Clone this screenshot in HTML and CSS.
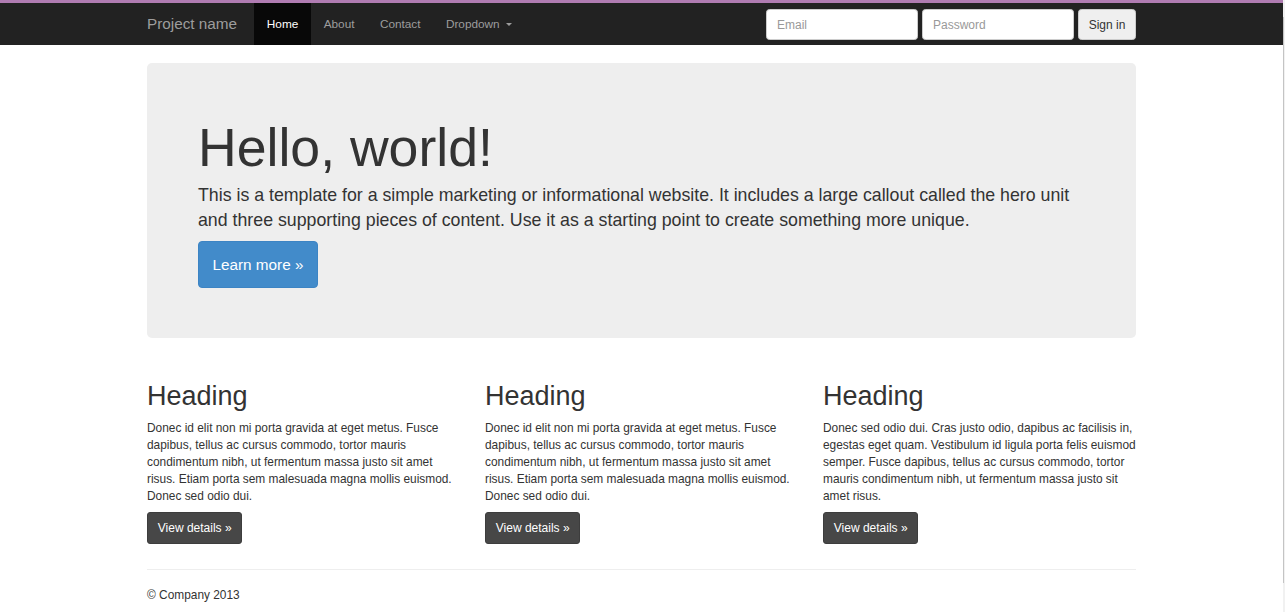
FILE: index.html
```html
<!DOCTYPE html>
<html lang="en">
<head>
<meta charset="utf-8">
<title>Jumbotron Template</title>
<link rel="stylesheet" href="styles.css">
</head>
<body>
<div class="topline"></div>
<nav class="navbar">
  <div class="container nav-inner">
    <a class="brand" href="#">Project name</a>
    <ul class="nav">
      <li class="active"><a href="#">Home</a></li>
      <li><a href="#about">About</a></li>
      <li><a href="#contact">Contact</a></li>
      <li><a href="#">Dropdown <span class="caret"></span></a></li>
    </ul>
    <form class="nav-form">
      <input class="field" type="text" placeholder="Email">
      <input class="field" type="password" placeholder="Password">
      <button class="btn-signin" type="button">Sign in</button>
    </form>
  </div>
</nav>

<main class="container">
  <section class="jumbotron">
    <h1>Hello, world!</h1>
    <p class="lead">This is a template for a simple marketing or informational website. It includes a large callout called the hero unit and three supporting pieces of content. Use it as a starting point to create something more unique.</p>
    <a class="btn-primary" href="#">Learn more &raquo;</a>
  </section>

  <div class="row">
    <div class="col">
      <h2>Heading</h2>
      <p>Donec id elit non mi porta gravida at eget metus. Fusce dapibus, tellus ac cursus commodo, tortor mauris condimentum nibh, ut fermentum massa justo sit amet risus. Etiam porta sem malesuada magna mollis euismod. Donec sed odio dui.</p>
      <a class="btn-dark" href="#">View details &raquo;</a>
    </div>
    <div class="col">
      <h2>Heading</h2>
      <p>Donec id elit non mi porta gravida at eget metus. Fusce dapibus, tellus ac cursus commodo, tortor mauris condimentum nibh, ut fermentum massa justo sit amet risus. Etiam porta sem malesuada magna mollis euismod. Donec sed odio dui.</p>
      <a class="btn-dark" href="#">View details &raquo;</a>
    </div>
    <div class="col">
      <h2>Heading</h2>
      <p>Donec sed odio dui. Cras justo odio, dapibus ac facilisis in, egestas eget quam. Vestibulum id ligula porta felis euismod semper. Fusce dapibus, tellus ac cursus commodo, tortor mauris condimentum nibh, ut fermentum massa justo sit amet risus.</p>
      <a class="btn-dark" href="#">View details &raquo;</a>
    </div>
  </div>

  <hr class="rule">
  <footer class="footer">&copy; Company 2013</footer>
</main>

<div class="scrollbar"><div class="thumb"></div></div>
</body>
</html>
```

FILE: styles.css
```css
* { box-sizing: border-box; }

html, body {
  margin: 0;
  padding: 0;
  background: #fff;
}

body {
  width: calc(100% - 2px);
  font-family: "Liberation Sans", Arial, Helvetica, sans-serif;
  font-size: 12px;
  line-height: 17px;
  color: #333;
  overflow: hidden;
}

a { text-decoration: none; }

.topline {
  height: 3px;
  background: #b07cb2;
}

.container {
  width: 989px;
  margin: 0 auto;
}

/* Navbar */
.navbar {
  height: 42px;
  background: #222;
}

.nav-inner {
  display: flex;
  align-items: stretch;
  height: 42px;
}

.brand {
  font-size: 15.3px;
  color: #9d9d9d;
  line-height: 42px;
  padding-right: 17px;
}

.nav {
  display: flex;
  list-style: none;
  margin: 0;
  padding: 0;
}

.nav li a {
  display: block;
  height: 42px;
  line-height: 42px;
  padding: 0 12.7px;
  color: #9d9d9d;
  font-size: 11.8px;
}

.nav li.active a {
  background: #080808;
  color: #fff;
}

.caret {
  display: inline-block;
  width: 0;
  height: 0;
  margin-left: 3px;
  vertical-align: middle;
  border-top: 3.5px solid #9d9d9d;
  border-left: 3.5px solid transparent;
  border-right: 3.5px solid transparent;
}

.nav-form {
  margin-left: auto;
  display: flex;
  gap: 4px;
  padding-top: 6px;
  height: 37px;
}

.field {
  width: 152px;
  height: 31px;
  border: 1px solid #ccc;
  border-radius: 3.5px;
  background: #fff;
  padding: 0 10px;
  font-family: "Liberation Sans", Arial, sans-serif;
  font-size: 12px;
  color: #555;
}

.field::placeholder { color: #999; }

.btn-signin {
  width: 58px;
  height: 31px;
  border: 1px solid #ccc;
  border-radius: 3.5px;
  background: #efefef;
  color: #333;
  font-family: "Liberation Sans", Arial, sans-serif;
  font-size: 12px;
  padding: 0;
}

/* Jumbotron */
.jumbotron {
  margin-top: 18px;
  height: 275px;
  background: #eee;
  border-radius: 5px;
  padding: 41px 51px 0;
}

.jumbotron h1 {
  margin: 14px 0 6px;
  font-size: 53.6px;
  font-weight: 400;
  line-height: 59px;
  color: #333;
}

.lead {
  margin: 0 0 8px;
  font-size: 17.75px;
  line-height: 25px;
  color: #333;
}

.btn-primary {
  display: inline-block;
  height: 47px;
  line-height: 45px;
  padding: 0 13.5px;
  background: #428bca;
  border: 1px solid #3c84c4;
  border-radius: 4px;
  color: #fff;
  font-size: 15.3px;
}

/* Columns */
.row {
  display: grid;
  grid-template-columns: repeat(3, 1fr);
  column-gap: 25px;
  margin-top: 25px;
}

.col h2 {
  margin: 18px 0 9px;
  font-size: 27px;
  font-weight: 400;
  line-height: 30px;
  color: #333;
}

.col p {
  margin: 0 0 7px;
  font-size: 11.9px;
  line-height: 17px;
}

.btn-dark {
  display: inline-block;
  height: 32px;
  line-height: 30px;
  padding: 0 9.8px;
  background: #474747;
  border: 1px solid #3d3d3d;
  border-radius: 3px;
  color: #fff;
  font-size: 12px;
}

.rule {
  margin: 25px 0 0;
  border: 0;
  border-top: 1px solid #eee;
}

.footer {
  padding: 17px 0 0;
  font-size: 11.9px;
  line-height: 17px;
}

/* Window scrollbar strip */
.scrollbar {
  position: fixed;
  top: 0;
  right: 0;
  bottom: 0;
  width: 2px;
  background: #f1f1f1;
}

.thumb {
  margin-top: 17px;
  height: 566px;
  width: 1px;
  background: #c4c4c4;
}
```
